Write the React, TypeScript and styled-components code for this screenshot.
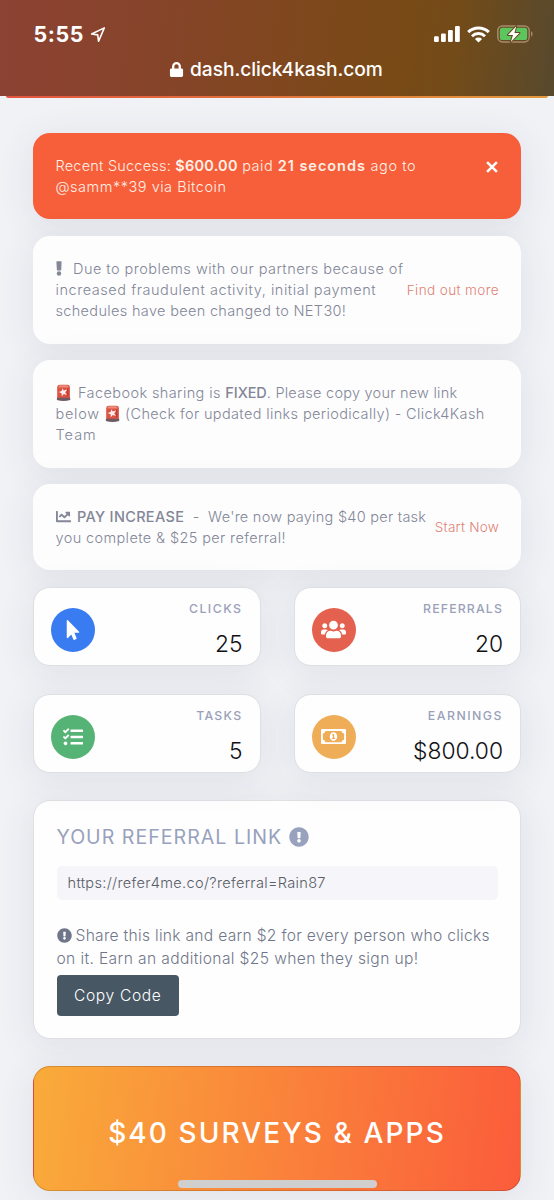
import React from "react";
import styled, { createGlobalStyle } from "styled-components";
import {
  FaChartLine,
  FaExclamationCircle,
  FaLock,
  FaMousePointer,
  FaRegMoneyBillAlt,
  FaTasks,
  FaUsers,
} from "react-icons/fa";

const GlobalStyle = createGlobalStyle`
  *, *::before, *::after { box-sizing: border-box; }
  body {
    margin: 0;
    background: #f1f2f6;
    font-family: Inter, "Liberation Sans", sans-serif;
    font-weight: 300;
  }
`;

const Screen = styled.div`
  position: relative;
  width: 554px;
  height: 1200px;
  overflow: hidden;
  background: #f1f2f6;
`;

const BrowserBar = styled.header`
  height: 96px;
  padding: 24px 21px 0 33.5px;
  color: #fff;
  background: linear-gradient(96deg, #8d4233 0%, #86442a 28%, #80471f 50%, #784a16 72%, #724b19 82%, #57492d 100%);
`;

const StatusRow = styled.div`
  display: flex;
  align-items: center;
  height: 20px;
`;

const Clock = styled.span`
  font-size: 21.4px;
  font-weight: 700;
  letter-spacing: 0.6px;
  margin-right: 6px;
`;

const StatusIcons = styled.div`
  display: flex;
  align-items: center;
  gap: 7px;
  margin-left: auto;
`;

const AddressRow = styled.div`
  display: flex;
  align-items: center;
  height: 24px;
  margin: 13px 0 0 135.5px;
  gap: 6px;
  font-size: 19.2px;
  font-weight: 500;
  letter-spacing: -0.05px;
`;

const HeaderEdge = styled.div`
  height: 2px;
  margin: 0 6px;
  border-radius: 0 0 8px 8px;
  background: linear-gradient(90deg, #e4553f, #e2703c 45%, #e39a3a);
`;

const Content = styled.main`
  padding: 35px 33px 0;
`;

const softShadow = "0 6px 34px 4px rgba(66, 70, 84, 0.08)";

const Notice = styled.section<{ $tall?: boolean; $alert?: boolean }>`
  display: flex;
  align-items: ${(p) => (p.$alert ? "flex-start" : "center")};
  justify-content: space-between;
  height: ${(p) => (p.$tall ? 108 : 86)}px;
  padding: 0 22px 0 22.5px;
  margin-bottom: ${(p) => (p.$tall ? 16.2 : 17)}px;
  border-radius: 17px;
  background: ${(p) => (p.$alert ? "#f75f3b" : "#fdfdfe")};
  color: ${(p) => (p.$alert ? "#fff0e6" : "#838797")};
  box-shadow: ${softShadow};
`;

const NoticeText = styled.div<{ $top?: number }>`
  padding-top: ${(p) => p.$top ?? 0}px;
  padding-bottom: 1px;
  font-size: 14.5px;
  line-height: 21.2px;
  white-space: pre;
`;

const Line = styled.div<{ $track?: number }>`
  display: flex;
  align-items: center;
  height: 21.2px;
  letter-spacing: ${(p) => p.$track ?? 0}px;
`;

const Run = styled.span<{ $track?: number; $weight?: number }>`
  letter-spacing: ${(p) => p.$track ?? 0}px;
  font-weight: ${(p) => p.$weight ?? 300};
`;

const Glyph = styled.span<{ $width: number }>`
  display: inline-flex;
  align-items: center;
  flex: none;
  width: ${(p) => p.$width}px;
`;

const NoticeLink = styled.a<{ $track: number }>`
  font-size: 13.6px;
  letter-spacing: ${(p) => p.$track}px;
  color: #dd8375;
  white-space: nowrap;
`;

const CloseButton = styled.button`
  display: flex;
  margin: 27.5px 1px 0 0;
  padding: 0;
  border: 0;
  background: none;
`;

const StatGrid = styled.div`
  display: grid;
  grid-template-columns: 227.5px 227px;
  grid-auto-rows: 79px;
  justify-content: space-between;
  row-gap: 28px;
  margin-bottom: 27px;
`;

const StatCard = styled.section`
  display: flex;
  align-items: center;
  justify-content: space-between;
  padding: 6px 17px 0 16.5px;
  border: 1px solid #dedfe3;
  border-radius: 17px;
  background: #fefefe;
  box-shadow: ${softShadow};
`;

const StatIcon = styled.div<{ $color: string }>`
  display: flex;
  align-items: center;
  justify-content: center;
  width: 44.5px;
  height: 44.5px;
  border-radius: 50%;
  color: #fff;
  background: ${(p) => p.$color};
`;

const StatFigures = styled.div`
  display: flex;
  flex-direction: column;
  align-items: flex-end;
`;

const StatLabel = styled.span<{ $track: number }>`
  font-size: 12.3px;
  font-weight: 450;
  line-height: 16px;
  letter-spacing: ${(p) => p.$track}px;
  color: #9aa1b9;
`;

const StatValue = styled.span`
  margin-top: 12px;
  font-size: 22.8px;
  line-height: 30px;
  color: #111114;
`;

const ReferralCard = styled.section`
  height: 239px;
  padding: 24px 22px 0 22.5px;
  border: 1px solid #dfe0e4;
  border-radius: 17px;
  background: #fefefe;
  box-shadow: ${softShadow};
  margin-bottom: 27px;
`;

const ReferralTitle = styled.h2`
  display: flex;
  align-items: center;
  gap: 7px;
  height: 24px;
  margin: 0;
  font-size: 19.6px;
  font-weight: 400;
  letter-spacing: 1px;
  color: #98a1bd;
`;

const LinkField = styled.div`
  display: flex;
  align-items: center;
  height: 34px;
  margin-top: 17px;
  padding-left: 11px;
  border-radius: 5px;
  background: #f5f5fa;
  font-size: 14.6px;
  letter-spacing: 0.3px;
  color: #5a5d66;
`;

const ReferralText = styled.div`
  margin-top: 23.5px;
  font-size: 15.6px;
  color: #70768a;
  white-space: pre;
`;

const ReferralLine = styled.div<{ $track: number }>`
  display: flex;
  align-items: center;
  height: 22.8px;
  letter-spacing: ${(p) => p.$track}px;
`;

const CopyButton = styled.button`
  display: block;
  width: 122.5px;
  height: 41px;
  margin-top: 5.5px;
  padding: 0;
  border: 0;
  border-radius: 4px;
  background: #485764;
  color: #fff;
  font-family: inherit;
  font-size: 15.6px;
  font-weight: 300;
  letter-spacing: 0.65px;
`;

const SurveyBanner = styled.section`
  display: flex;
  align-items: center;
  justify-content: center;
  height: 125px;
  padding-top: 8px;
  border: 1px solid rgba(0, 0, 0, 0.15);
  border-radius: 17px;
  background: linear-gradient(97deg, #f9ab3a, #fb5c3b);
  box-shadow: ${softShadow};
  color: #fff;
  font-size: 28px;
  font-weight: 500;
  letter-spacing: 2.1px;
`;

const HomeIndicator = styled.div`
  position: absolute;
  left: 178px;
  top: 1180px;
  width: 199px;
  height: 8px;
  border-radius: 4px;
  background: #d0cfcf;
`;

const LocationArrow = () => (
  <svg width="16" height="17" viewBox="0 0 16 17" fill="none" stroke="#fff" strokeWidth="1.6" strokeLinejoin="round">
    <path d="M14.3 1.9 1.6 8l6.1.9.9 6.4z" />
  </svg>
);

const Signal = () => (
  <svg width="26" height="16" viewBox="0 0 26 16" fill="#fff">
    <rect x="0" y="10.2" width="4.8" height="5.8" rx="1.2" />
    <rect x="7" y="7.4" width="4.8" height="8.6" rx="1.2" />
    <rect x="14" y="4" width="4.8" height="12" rx="1.2" />
    <rect x="21" y="0" width="4.8" height="16" rx="1.2" />
  </svg>
);

const Wifi = () => (
  <svg width="23" height="17" viewBox="0 0 23 17" fill="none" stroke="#fff">
    <path d="M1.2 6.1a14.8 14.8 0 0 1 20.6 0" strokeWidth="3.1" />
    <path d="M5 10.2a9.3 9.3 0 0 1 13 0" strokeWidth="2.9" />
    <path d="M11.5 16.6 7.9 13a5.2 5.2 0 0 1 7.2 0z" fill="#fff" stroke="none" />
  </svg>
);

const Battery = () => (
  <svg width="36" height="18" viewBox="0 0 36 18">
    <rect x="0.8" y="0.9" width="31.4" height="16" rx="4.6" fill="none" stroke="#a88a69" strokeWidth="1.5" />
    <path d="M34 6.2c2.2.8 2.2 4.6 0 5.4z" fill="#a0866b" />
    <rect x="2.8" y="2.8" width="27.4" height="12.2" rx="2.6" fill="#5cc55d" />
    <path
      d="M19.2 1.2 11 9.9h5l-2.2 7 8.6-8.9h-5z"
      fill="#fff"
      stroke="#63491d"
      strokeWidth="2"
      strokeLinejoin="round"
      paintOrder="stroke"
    />
  </svg>
);

const Bang = () => (
  <svg width="6" height="15" viewBox="0 0 6 15" fill="currentColor">
    <path d="M1 .2h4q.6 0 .6.7l-.4 8q0 .6-.6.6H1.5q-.6 0-.6-.6L.4.9Q.4.2 1 .2z" />
    <circle cx="3" cy="12.5" r="2.2" />
  </svg>
);

const Siren = () => (
  <svg width="15" height="18" viewBox="0 0 15 18">
    <path d="M1.2 15V3.2Q1.3.8 3.6.8h8Q13.8.8 13.9 3.2V15z" fill="#db5344" />
    <path d="M3.2 1.2h8.4l1.2 2.2H2.2z" fill="#ee8a78" />
    <path d="M.9 13.8h13.3v2.1q-6.6 2-13.3 0z" fill="#6f5a62" />
    <path d="m6.6 4.2 1 2.4 3.6-1.2-2 2.8 1.6 2.8-3-1-2 2.2-.2-3-3-1.2 3-1.1z" fill="#fff0ec" />
    <path d="M11.8 4.5v8" stroke="#b23733" strokeWidth="1" />
  </svg>
);

const CloseIcon = () => (
  <svg width="12" height="12" viewBox="0 0 12 12" stroke="#fff" strokeWidth="2.5">
    <path d="m1.1 1.1 9.8 9.8M10.9 1.1 1.1 10.9" />
  </svg>
);

const stats = [
  { label: "CLICKS", track: 1.5, value: "25", color: "#397bf1", icon: <FaMousePointer size={20} /> },
  { label: "REFERRALS", track: 1.15, value: "20", color: "#e5614f", icon: <FaUsers size={25} /> },
  { label: "TASKS", track: 1.3, value: "5", color: "#55b475", icon: <FaTasks size={20} /> },
  { label: "EARNINGS", track: 1.5, value: "$800.00", color: "#efad57", icon: <FaRegMoneyBillAlt size={25} /> },
];

export default function App() {
  return (
    <Screen>
      <GlobalStyle />
      <BrowserBar>
        <StatusRow>
          <Clock>5:55</Clock>
          <LocationArrow />
          <StatusIcons>
            <Signal />
            <Wifi />
            <Battery />
          </StatusIcons>
        </StatusRow>
        <AddressRow>
          <FaLock size={15} />
          <span>dash.click4kash.com</span>
        </AddressRow>
      </BrowserBar>
      <HeaderEdge />

      <Content>
        <Notice $alert>
          <NoticeText $top={21.5}>
            <Line>
              <Run $track={0.22}>Recent Success: </Run>
              <Run $track={0.22} $weight={600}>$600.00</Run>
              <Run $track={0.5}> paid </Run>
              <Run $track={0.95} $weight={600}>21 seconds</Run>
              <Run $track={0.6}> ago to</Run>
            </Line>
            <Line $track={0.52}>@samm**39 via Bitcoin</Line>
          </NoticeText>
          <CloseButton aria-label="Dismiss">
            <CloseIcon />
          </CloseButton>
        </Notice>

        <Notice $tall>
          <NoticeText>
            <Line $track={0.47}>
              <Glyph $width={17.5}>
                <Bang />
              </Glyph>
              Due to problems with our partners because of
            </Line>
            <Line $track={0.55}>increased fraudulent activity, initial payment</Line>
            <Line $track={0.33}>schedules have been changed to NET30!</Line>
          </NoticeText>
          <NoticeLink $track={0.36}>Find out more</NoticeLink>
        </Notice>

        <Notice $tall>
          <NoticeText>
            <Line>
              <Glyph $width={22.5}>
                <Siren />
              </Glyph>
              <Run $track={0.4}>Facebook sharing is </Run>
              <Run $track={-0.1} $weight={500}>FIXED</Run>
              <Run $track={0.24}>. Please copy your new link</Run>
            </Line>
            <Line>
              <Run $track={0.72}>below </Run>
              <Glyph $width={20.5}>
                <Siren />
              </Glyph>
              <Run $track={0.36}>(Check for updated links periodically) - Click4Kash</Run>
            </Line>
            <Line $track={1}>Team</Line>
          </NoticeText>
        </Notice>

        <Notice>
          <NoticeText>
            <Line>
              <Glyph $width={21.5}>
                <FaChartLine size={15} />
              </Glyph>
              <Run $track={0.32} $weight={500}>PAY INCREASE</Run>
              <Run $track={0.2}>{"  -  "}</Run>
              <Run $track={0.26}>We're now paying $40 per task</Run>
            </Line>
            <Line $track={0.38}>you complete &amp; $25 per referral!</Line>
          </NoticeText>
          <NoticeLink $track={0.2}>Start Now</NoticeLink>
        </Notice>

        <StatGrid>
          {stats.map((s) => (
            <StatCard key={s.label}>
              <StatIcon $color={s.color}>{s.icon}</StatIcon>
              <StatFigures>
                <StatLabel $track={s.track}>{s.label}</StatLabel>
                <StatValue>{s.value}</StatValue>
              </StatFigures>
            </StatCard>
          ))}
        </StatGrid>

        <ReferralCard>
          <ReferralTitle>
            YOUR REFERRAL LINK <FaExclamationCircle size={20} />
          </ReferralTitle>
          <LinkField>https://refer4me.co/?referral=Rain87</LinkField>
          <ReferralText>
            <ReferralLine $track={0.29}>
              <Glyph $width={19}>
                <FaExclamationCircle size={15} />
              </Glyph>
              Share this link and earn $2 for every person who clicks
            </ReferralLine>
            <ReferralLine $track={0.37}>on it. Earn an additional $25 when they sign up!</ReferralLine>
          </ReferralText>
          <CopyButton>Copy Code</CopyButton>
        </ReferralCard>

        <SurveyBanner>$40 SURVEYS &amp; APPS</SurveyBanner>
      </Content>
      <HomeIndicator />
    </Screen>
  );
}
